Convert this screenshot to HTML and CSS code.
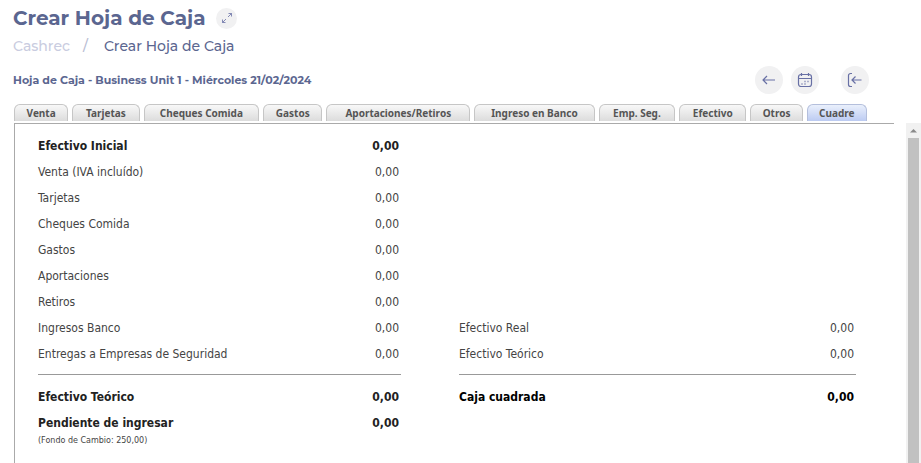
FILE: index.html
```html
<!DOCTYPE html>
<html lang="es">
<head>
    <meta charset="UTF-8">
    <meta name="viewport" content="width=device-width, initial-scale=1.0">
    <title>Crear Hoja de Caja</title>
    <link rel="stylesheet" href="styles.css">
</head>
<body>
    <header class="header">
        <div class="title-row">
            <h1>Crear Hoja de Caja</h1>
            <button type="button" class="round small" aria-label="Expandir">
                <svg width="12" height="12" viewBox="0 0 12 12"><path d="M7.500 1.500h3v3M10.500 1.500L7 5M5 7l-3.500 3.500M1.500 7.500v3h3"/></svg>
            </button>
        </div>
        <nav class="breadcrumb">
            <a href="#">Cashrec</a>
            <span class="slash">/</span>
            <span>Crear Hoja de Caja</span>
        </nav>
        <div class="toolbar">
            <h2>Hoja de Caja - Business Unit 1 - Miércoles 21/02/2024</h2>
            <div class="actions">
                <button type="button" class="round" aria-label="Volver">
                    <svg width="16" height="16" viewBox="0 0 16 16"><path d="M14 8H2M6 4L2 8l4 4"/></svg>
                </button>
                <button type="button" class="round" aria-label="Calendario">
                    <svg width="16" height="16" viewBox="0 0 16 16"><rect x="1.500" y="2.500" width="13" height="12" rx="2.500"/><path d="M1.500 6.500h13M4.500 1v3M11.500 1v3"/><path class="dots" d="M10.500 9.500h1M7.500 9.500h1M4.500 12h1M7.500 12h1"/></svg>
                </button>
                <button type="button" class="round exit" aria-label="Salir">
                    <svg width="16" height="16" viewBox="0 0 16 16"><path d="M5 1.500H3.500a2 2 0 0 0-2 2v9a2 2 0 0 0 2 2H5M14.500 8H5M8.500 4.500L5 8l3.500 3.500"/></svg>
                </button>
            </div>
        </div>
    </header>

    <div class="tabs" role="tablist">
        <button type="button" role="tab">Venta</button>
        <button type="button" role="tab">Tarjetas</button>
        <button type="button" role="tab">Cheques Comida</button>
        <button type="button" role="tab">Gastos</button>
        <button type="button" role="tab">Aportaciones/Retiros</button>
        <button type="button" role="tab">Ingreso en Banco</button>
        <button type="button" role="tab">Emp. Seg.</button>
        <button type="button" role="tab">Efectivo</button>
        <button type="button" role="tab">Otros</button>
        <button type="button" role="tab" class="active" aria-selected="true">Cuadre</button>
    </div>

    <div class="content">
        <main class="panel">
            <table>
                <tbody>
                    <tr class="total"><th scope="row">Efectivo Inicial</th><td>0,00</td></tr>
                    <tr><th scope="row">Venta (IVA incluído)</th><td>0,00</td></tr>
                    <tr><th scope="row">Tarjetas</th><td>0,00</td></tr>
                    <tr><th scope="row">Cheques Comida</th><td>0,00</td></tr>
                    <tr><th scope="row">Gastos</th><td>0,00</td></tr>
                    <tr><th scope="row">Aportaciones</th><td>0,00</td></tr>
                    <tr><th scope="row">Retiros</th><td>0,00</td></tr>
                    <tr><th scope="row">Ingresos Banco</th><td>0,00</td></tr>
                    <tr><th scope="row">Entregas a Empresas de Seguridad</th><td>0,00</td></tr>
                </tbody>
                <tfoot>
                    <tr class="total sum"><th scope="row">Efectivo Teórico</th><td>0,00</td></tr>
                    <tr class="total"><th scope="row">Pendiente de ingresar</th><td>0,00</td></tr>
                    <tr class="note"><td colspan="2">(Fondo de Cambio: 250,00)</td></tr>
                </tfoot>
            </table>

            <table class="real">
                <tbody>
                    <tr><th scope="row">Efectivo Real</th><td>0,00</td></tr>
                    <tr><th scope="row">Efectivo Teórico</th><td>0,00</td></tr>
                </tbody>
                <tfoot>
                    <tr class="total sum result"><th scope="row">Caja cuadrada</th><td>0,00</td></tr>
                </tfoot>
            </table>
        </main>
        <div class="scrollbar" aria-hidden="true">
            <svg width="15" height="15" viewBox="0 0 15 15"><path d="M4 9.500L7.500 6 11 9.500z"/></svg>
            <div class="thumb"></div>
        </div>
    </div>
</body>
</html>
```

FILE: styles.css
```css
* {
    box-sizing: border-box;
}
body {
    margin: 0;
    min-height: 100vh;
    display: flex;
    flex-direction: column;
    background: #fff;
    color: #444;
    font-family: "DejaVu Sans Condensed", "Noto Sans", sans-serif;
    font-size: 12px;
}
button {
    border: 0;
    padding: 0;
    font: inherit;
    cursor: pointer;
}

/* Header */
.header {
    padding: 4px 52px 0 13px;
    color: #5b6690;
    font-family: Montserrat, Inter, sans-serif;
}
h1, h2 {
    margin: 0;
    font-weight: 700;
}
h1 {
    font-size: 20px;
    line-height: 28px;
}
h2 {
    font-size: 11px;
}
.title-row {
    display: flex;
    align-items: center;
    gap: 11px;
}
.round {
    display: flex;
    align-items: center;
    justify-content: center;
    width: 28px;
    height: 28px;
    border-radius: 50%;
    background: #f1f1f2;
}
.round svg {
    fill: none;
    stroke: #6870a5;
    stroke-width: 1.2;
}
.round .dots {
    stroke-width: 1.5;
}
.round.small {
    width: 21px;
    height: 21px;
}
.round.small svg {
    stroke-width: 0.8;
}
.breadcrumb {
    display: flex;
    gap: 13px;
    padding-top: 4px;
    font-size: 14px;
    font-weight: 500;
    line-height: 20px;
}
.breadcrumb a {
    color: #c9cce0;
    text-decoration: none;
}
.slash {
    margin-right: 3px;
    color: #b9bdd3;
}
.toolbar {
    display: flex;
    align-items: center;
    justify-content: space-between;
    padding-top: 10px;
}
.actions {
    display: flex;
    gap: 8px;
}
.exit {
    margin-left: 14px;
}

/* Tabs */
.tabs {
    display: grid;
    grid-template-columns: 54fr 67fr 115fr 59fr 143fr 120fr 76fr 67fr 52fr 60fr;
    gap: 4px;
    padding: 10px 54px 2px 14px;
}
.tabs button {
    height: 17px;
    border: 1px solid #c6c6c6;
    border-bottom: 0;
    border-radius: 6px 6px 0 0;
    background: linear-gradient(#f8f8f8, #dcdcdc);
    color: #555;
    font-family: "Noto Sans", sans-serif;
    font-size: 10px;
    font-weight: 700;
    line-height: 16px;
    white-space: nowrap;
}
.tabs .active {
    border-color: #b4bfdc;
    background: linear-gradient(#eaf0fc, #bccbf2);
}

/* Panel */
.content {
    flex: 1;
    display: flex;
    gap: 12px;
    padding-left: 14px;
}
.panel {
    flex: 1;
    display: grid;
    grid-template-columns: 363fr 397fr;
    align-items: start;
    gap: 58px;
    padding: 9px 38px 0 23px;
    border-top: 1px solid #aaa;
    border-left: 1px solid #aaa;
}
table {
    width: 100%;
    border-spacing: 0;
}
th, td {
    padding: 0;
    line-height: 26px;
    font-weight: 400;
    text-align: left;
}
td {
    padding-right: 2px;
    text-align: right;
}
tbody tr:last-child > * {
    padding-bottom: 7px;
}
.total > * {
    color: #222;
    font-weight: 700;
}
.sum > * {
    padding-top: 9px;
    border-top: 1px solid #999;
}
.result > * {
    color: #000;
}
.note td {
    font-family: Verdana, "DejaVu Sans", sans-serif;
    font-size: 8px;
    line-height: 10px;
    text-align: left;
}
/* starts level with the eighth row of the first table */
.real {
    margin-top: 182px;
}

/* Scrollbar */
.scrollbar {
    display: flex;
    flex-direction: column;
    width: 15px;
    background: #f1f1f1;
}
.scrollbar svg {
    fill: #8a8a8a;
}
.thumb {
    flex: 1;
    margin: 0 2px;
    background: #c1c1c1;
}
```
